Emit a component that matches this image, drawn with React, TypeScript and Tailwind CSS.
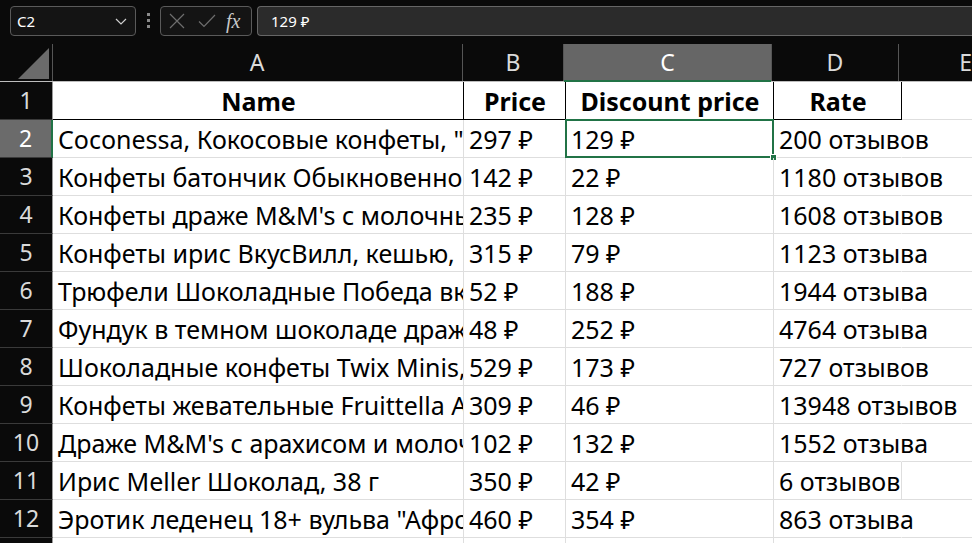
import React from "react";

interface Row {
  name: string;
  price: string;
  discount: string;
  rate: string;
}

const rows: Row[] = [
  { name: 'Coconessa, Кокосовые конфеты, "Кокос", 200 г', price: "297 ₽", discount: "129 ₽", rate: "200 отзывов" },
  { name: "Конфеты батончик Обыкновенное чудо, 1 кг", price: "142 ₽", discount: "22 ₽", rate: "1180 отзывов" },
  { name: "Конфеты драже M&M's с молочным шоколадом", price: "235 ₽", discount: "128 ₽", rate: "1608 отзывов" },
  { name: "Конфеты ирис ВкусВилл, кешью, 150 г", price: "315 ₽", discount: "79 ₽", rate: "1123 отзыва" },
  { name: "Трюфели Шоколадные Победа вкуса, 180 г", price: "52 ₽", discount: "188 ₽", rate: "1944 отзыва" },
  { name: "Фундук в темном шоколаде драже, 200 г", price: "48 ₽", discount: "252 ₽", rate: "4764 отзыва" },
  { name: "Шоколадные конфеты Twix Minis, 184 г", price: "529 ₽", discount: "173 ₽", rate: "727 отзывов" },
  { name: "Конфеты жевательные Fruittella Аниматы", price: "309 ₽", discount: "46 ₽", rate: "13948 отзывов" },
  { name: "Драже M&M's с арахисом и молочным шоколадом", price: "102 ₽", discount: "132 ₽", rate: "1552 отзыва" },
  { name: "Ирис Meller Шоколад, 38 г", price: "350 ₽", discount: "42 ₽", rate: "6 отзывов" },
  { name: 'Эротик леденец 18+ вульва "Афродита"', price: "460 ₽", discount: "354 ₽", rate: "863 отзыва" },
];

function Toolbar() {
  return (
    <div className="h-[44px] flex items-start pt-[6px]">
      {/* Name box */}
      <div className="ml-[10px] w-[126px] h-[30px] rounded-[4px] border border-[#5a5a5a] bg-[#141414] flex items-center justify-between pl-[6px] pr-[8px]">
        <span className="text-[15px] text-white">C2</span>
        <svg width="12" height="7" viewBox="0 0 12 7" fill="none">
          <path d="M1 1 L6 6 L11 1" stroke="#d0d0d0" strokeWidth="1.2" />
        </svg>
      </div>
      {/* dots */}
      <div className="ml-[11px] mt-[7px] flex flex-col gap-[3px]">
        <div className="w-[3px] h-[3px] bg-[#8a8a8a]" />
        <div className="w-[3px] h-[3px] bg-[#8a8a8a]" />
        <div className="w-[3px] h-[3px] bg-[#8a8a8a]" />
      </div>
      {/* formula buttons */}
      <div className="ml-[10px] w-[92px] h-[30px] rounded-[4px] border border-[#5a5a5a] bg-[#141414] flex items-center pl-[8px] pr-[6px]">
        <svg width="16" height="16" viewBox="0 0 16 16" fill="none">
          <path d="M1 1 L15 15 M15 1 L1 15" stroke="#6e6e6e" strokeWidth="1.2" />
        </svg>
        <svg className="ml-[13px]" width="18" height="14" viewBox="0 0 18 14" fill="none">
          <path d="M1 7.5 L6 12.5 L17 1" stroke="#6e6e6e" strokeWidth="1.2" />
        </svg>
        <span className="ml-[10px] text-[20px] leading-none italic text-[#c8c8c8] font-['Liberation_Serif',serif]">fx</span>
      </div>
      {/* formula input */}
      <div className="ml-[5px] flex-1 h-[30px] rounded-l-[4px] border-y border-l border-[#666666] bg-[#2b2b2b] flex items-center pl-[13px]">
        <span className="text-[15px] text-white">129 ₽</span>
      </div>
    </div>
  );
}

function HeaderRow() {
  const hd = "h-full box-border border-r border-[#555555] flex items-center justify-center text-[23px] text-[#dadada]";
  return (
    <div className="h-[38px] box-border border-b border-[#bdbdbd] flex">
      <div className="w-[53px] h-full box-border border-r border-[#555555] flex items-end justify-end pr-[3px] pb-[2px]">
        <svg width="31" height="31" viewBox="0 0 31 31">
          <polygon points="0,31 31,31 31,0" fill="#6b6b6b" />
        </svg>
      </div>
      <div className={`${hd} w-[411px]`}>A</div>
      <div className={`${hd} w-[102px]`}>B</div>
      <div className={`${hd} w-[208px] bg-[#666666] text-white relative`}>
        C
        <div className="absolute left-0 right-0 -bottom-[1px] h-[2px] bg-[#217346]" />
      </div>
      <div className={`${hd} w-[128px]`}>D</div>
      <div className="h-full flex-1 flex items-center justify-start pl-[60px] text-[23px] text-[#dadada]">E</div>
    </div>
  );
}

function DataRow({ n, row }: { n: number; row?: Row }) {
  const first = n === 1;
  const sel = n === 2;
  const line = first ? "border-black" : "border-[#dedede]";
  const cell = `h-full box-border border-b border-r ${line} flex items-center pl-[5px] pr-[4px] pt-[3px] whitespace-nowrap text-[25px] text-black`;
  const head = first ? "justify-center font-bold px-0 text-[23.5px]" : "";
  const dBorder = first ? "border-r-black" : n === 11 ? "border-r-[#dedede]" : "border-r-transparent";
  return (
    <div className="h-[38px] flex bg-white">
      <div
        className={`w-[53px] h-full box-border border-b border-b-[#3a3a3a] border-r flex items-center justify-center text-[23px] ${
          sel ? "bg-[#6b6b6b] text-white border-r-[#217346] border-r-2" : "bg-[#0a0a0a] text-[#dadada] border-r-[#9a9a9a]"
        }`}
      >
        {n}
      </div>
      <div className={`${cell} ${head} w-[411px] overflow-hidden`}>{first ? "Name" : row?.name}</div>
      <div className={`${cell} ${head} w-[102px] overflow-hidden`}>{first ? "Price" : row?.price}</div>
      <div className={`${cell} ${head} w-[208px] relative`}>
        {first ? "Discount price" : row?.discount}
        {sel && (
          <>
            <div className="absolute -left-[1px] -top-[1px] -right-[1px] -bottom-[1px] border-2 border-[#217346]" />
            <div className="absolute -right-[4px] -bottom-[4px] w-[7px] h-[7px] bg-[#217346] border border-white" />
          </>
        )}
      </div>
      <div className={`${cell} ${head} ${dBorder} w-[128px] overflow-visible`}>{first ? "Rate" : row?.rate}</div>
      <div className="h-full flex-1 box-border border-b border-[#dedede]" />
    </div>
  );
}

export default function App() {
  return (
    <div className="w-[972px] h-[543px] overflow-hidden bg-[#0a0a0a] font-['Noto_Sans',sans-serif]">
      <Toolbar />
      <HeaderRow />
      <DataRow n={1} />
      {rows.map((r, i) => (
        <DataRow key={i} n={i + 2} row={r} />
      ))}
      <DataRow n={13} row={{ name: "", price: "", discount: "", rate: "" }} />
    </div>
  );
}
